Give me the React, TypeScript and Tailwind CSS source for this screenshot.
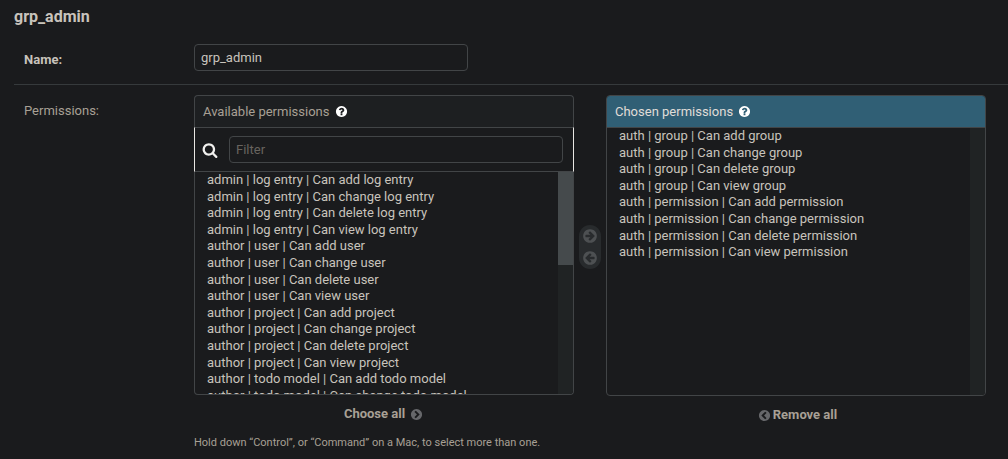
import React from "react";

const DISC =
  "q0 209-103 385.5t-279.5 279.5-385.5 103-385.5-103-279.5-279.5-103-385.5 103-385.5 279.5-279.5 385.5-103 385.5 103 279.5 279.5 103 385.5z";

const ICONS = {
  question:
    "M1024 1376v-192q0-14-9-23t-23-9h-192q-14 0-23 9t-9 23v192q0 14 9 23t23 9h192q14 0 23-9t9-23zm256-672q0-88-55.5-163t-138.5-116-170-41q-243 0-371 213-15 24 8 42l132 100q7 6 19 6 16 0 25-12 53-68 86-92 34-24 86-24 48 0 85.5 26t37.5 59q0 38-20 61t-68 45q-63 28-115.5 86.5t-52.5 125.5v36q0 14 9 23t23 9h192q14 0 23-9t9-23q0-19 21.5-49.5t54.5-49.5q32-18 49-28.5t46-35 44.5-48 28-60.5 12.5-81zm384 192" +
    DISC,
  search:
    "M1216 832q0-185-131.5-316.5t-316.5-131.5-316.5 131.5-131.5 316.5 131.5 316.5 316.5 131.5 316.5-131.5 131.5-316.5zm512 832q0 52-38 90t-90 38q-54 0-90-38l-343-342q-179 124-399 124-143 0-273.5-55.5t-225-150-150-225-55.5-273.5 55.5-273.5 150-225 225-150 273.5-55.5 273.5 55.5 225 150 150 225 55.5 273.5q0 220-124 399l343 343q37 37 37 90z",
  arrow:
    "M1413 896q0-27-18-45l-91-91-362-362q-18-18-45-18t-45 18l-91 91q-18 18-18 45t18 45l189 189h-502q-26 0-45 19t-19 45v128q0 26 19 45t45 19h502l-189 189q-19 19-19 45t19 45l91 91q18 18 45 18t45-18l362-362 91-91q18-18 18-45zm251 0" +
    DISC,
  chevron:
    "M845 1395l454-454q19-19 19-45t-19-45l-454-454q-19-19-45-19t-45 19l-102 102q-19 19-19 45t19 45l307 307-307 307q-19 19-19 45t19 45l102 102q19 19 45 19t45-19zm819-499" +
    DISC,
};

function Icon({ name, className }: { name: keyof typeof ICONS; className: string }) {
  return (
    <svg viewBox="0 0 1792 1792" fill="currentColor" className={"shrink-0 " + className} aria-hidden="true">
      <path d={ICONS[name]} />
    </svg>
  );
}

const ACTIONS = ["add", "change", "delete", "view"];

function permissions(app: string, model: string, actions = ACTIONS) {
  return actions.map((action) => `${app} | ${model} | Can ${action} ${model}`);
}

const AVAILABLE = [
  ...permissions("admin", "log entry"),
  ...permissions("author", "user"),
  ...permissions("author", "project"),
  ...permissions("author", "todo model", ["add", "change"]),
];

const CHOSEN = [...permissions("auth", "group"), ...permissions("auth", "permission")];

function Options({ items }: { items: string[] }) {
  return (
    <ul className="min-w-0 flex-1 overflow-hidden pl-3 text-[13px] leading-[16.6px] text-[#c8c3bc]">
      {items.map((item) => (
        <li key={item} className="whitespace-nowrap">
          {item}
        </li>
      ))}
    </ul>
  );
}

export default function App() {
  return (
    <main className="flex h-[459px] w-full flex-col overflow-hidden bg-[#1a1b1d] pl-[14px] font-['Roboto',sans-serif] text-[13px] text-[#a8a095]">
      <h2 className="mt-2 h-[18px] text-base leading-[18px] font-bold text-[#c8c3bc]">grp_admin</h2>

      <div className="mt-[18px] flex h-10 shrink-0 pl-[10px]">
        <label htmlFor="name" className="w-[170px] pt-2 leading-4 font-bold text-[#c8c3bc]">
          Name:
        </label>
        <input
          id="name"
          defaultValue="grp_admin"
          className="h-[27px] w-[274px] rounded border border-[#424547] bg-transparent px-1.5 text-[#c8c3bc] outline-none"
        />
      </div>

      <div className="flex h-[375px] shrink-0 border-t border-[#363a3c] pt-[10px] pl-[10px]">
        <div className="w-[170px] pt-[8px] leading-4">Permissions:</div>

        <section className="w-[380px]">
          <div className="flex h-8 items-center gap-[6px] rounded-t border border-b-0 border-[#424547] bg-[#1d1f21] px-2">
            Available permissions
            <Icon name="question" className="size-[13px] text-white" />
          </div>
          <div className="flex h-[45px] items-start border-x border-y border-x-[#e8e6e3] border-y-[#424547] pt-2 pl-[7px]">
            <Icon name="search" className="mt-[6px] size-4 text-[#f1f0ee]" />
            <input
              placeholder="Filter"
              className="ml-[11px] h-[27px] w-[334px] rounded border border-[#424547] bg-transparent px-1.5 outline-none placeholder:text-[#68645f]"
            />
          </div>
          <div className="flex h-[223px] overflow-hidden rounded-b border border-t-0 border-[#424547]">
            <Options items={AVAILABLE} />
            <div className="w-[15px] bg-[#202324]">
              <div className="h-[93px] bg-[#454a4c]" />
            </div>
          </div>
          <button className="mx-auto mt-[11px] flex h-4 items-center gap-[5px] pr-[1px] font-bold">
            Choose all
            <Icon name="chevron" className="mt-[1px] size-[13px] text-[#66676a]" />
          </button>
          <p className="mt-[13px] text-[11px] leading-4">
            Hold down “Control”, or “Command” on a Mac, to select more than one.
          </p>
        </section>

        <div className="mx-[5px] mt-[130px] flex h-11 w-[22px] flex-col items-center justify-around rounded-full bg-[#282b2d] text-[#4d5052]">
          <Icon name="arrow" className="size-4" />
          <Icon name="arrow" className="size-4 rotate-180" />
        </div>

        <section className="w-[380px]">
          <div className="flex h-[301px] flex-col overflow-hidden rounded border border-[#424547]">
            <div className="flex h-8 shrink-0 items-center gap-[5px] border-b border-[#424547] bg-[#305f75] px-2 text-[#e0ddd8]">
              Chosen permissions
              <Icon name="question" className="size-[13px] text-white" />
            </div>
            <div className="flex min-h-0 flex-1">
              <Options items={CHOSEN} />
              <div className="w-[15px] bg-[#202324]" />
            </div>
          </div>
          <button className="mx-auto mt-[11px] flex h-4 items-center gap-[2px] pl-[3px] font-bold">
            <Icon name="chevron" className="mt-[1px] size-[13px] rotate-180 text-[#66676a]" />
            Remove all
          </button>
        </section>
      </div>
    </main>
  );
}
